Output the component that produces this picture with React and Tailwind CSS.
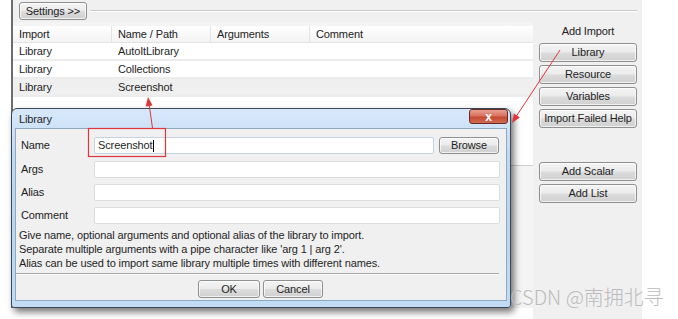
import React from "react";

function Btn({ children, className = "" }) {
  return (
    <div
      className={
        "flex items-center justify-center rounded-[3px] border border-[#8e8f8f] bg-[linear-gradient(#f4f4f4_0%,#ebebeb_48%,#dcdcdc_52%,#d0d0d0_100%)] text-[#1e1e1e] shadow-[inset_0_0_0_1px_rgba(255,255,255,0.7)] " +
        className
      }
    >
      {children}
    </div>
  );
}

function Row({ label, children, className = "" }) {
  return (
    <div className={"flex h-[17px] items-center " + className}>
      <div className="w-[78px] pl-[5px] text-[#222]">{label}</div>
      {children}
    </div>
  );
}

export default function App() {
  return (
    <div className="relative w-[678px] h-[319px] overflow-hidden bg-white font-['Liberation_Sans',Arial,sans-serif] text-[11px] tracking-[-0.12px] text-[#1e1e1e]">
      {/* main window */}
      <div className="ml-[11px] flex h-[319px] w-[631px] flex-col">
        {/* settings row */}
        <div className="flex h-[22px] items-center border-l-2 border-[#6d6d6d] bg-[#f0f0f0] pl-[6px] pr-[5px]">
          <Btn className="h-[18px] w-[68px]">Settings &gt;&gt;</Btn>
          <div className="ml-[3px] h-[2px] flex-1 border-t border-b border-t-[#c8c8c8] border-b-white" />
        </div>
        <div className="flex flex-1">
          {/* left column */}
          <div className="flex w-[522px] flex-col">
            <div className="flex flex-1 flex-col border-l-2 border-[#6d6d6d] bg-[#f4f4f4] pt-[4px]">
              <div className="flex h-[140px] flex-col border-b border-[#cfcfcf] bg-white">
                <div className="flex h-[17px] items-center border-b border-[#e2e2e2] bg-[linear-gradient(#ffffff,#f3f3f3)] text-[#222]">
                  <div className="w-[99px] border-r border-[#e4e4e4] pl-[6px]">Import</div>
                  <div className="w-[99px] border-r border-[#e4e4e4] pl-[6px]">Name / Path</div>
                  <div className="w-[99px] border-r border-[#e4e4e4] pl-[6px]">Arguments</div>
                  <div className="flex-1 pl-[6px]">Comment</div>
                </div>
                {[
                  ["Library", "AutoItLibrary", "bg-white"],
                  ["Library", "Collections", "bg-white"],
                  ["Library", "Screenshot", "bg-[#efefef]"],
                ].map(([a, b, bg]) => (
                  <div key={b} className={"flex h-[18px] items-center border-b-2 border-[#ececec] " + bg}>
                    <div className="w-[99px] pl-[6px]">{a}</div>
                    <div className="w-[99px] pl-[6px]">{b}</div>
                  </div>
                ))}
              </div>
            </div>
            <div className="h-[11px] bg-white" />
          </div>
          {/* right panel */}
          <div className="flex w-[109px] flex-col bg-[#f0f0f0] pl-[6px] pr-[5px] pt-[2px]">
            <div className="h-[14px] text-center leading-[14px] text-[#222]">Add Import</div>
            <div className="mt-[5px] flex flex-col gap-[3px]">
              <Btn className="h-[19px]">Library</Btn>
              <Btn className="h-[19px]">Resource</Btn>
              <Btn className="h-[19px]">Variables</Btn>
              <Btn className="h-[19px]">Import Failed Help</Btn>
            </div>
            <div className="mt-[34px] flex flex-col gap-[3px]">
              <Btn className="h-[19px]">Add Scalar</Btn>
              <Btn className="h-[19px]">Add List</Btn>
            </div>
          </div>
        </div>
      </div>

      {/* dialog */}
      <div className="absolute left-[11px] top-[108px] flex h-[200px] w-[500px] flex-col rounded-t-[6px] rounded-b-[3px] border border-[#3d4856] bg-[linear-gradient(#d7e8fa,#bfd9f4_25%,#b9d5f2_60%,#c2dcf5)] px-[3px] pb-[6px] shadow-[3px_4px_7px_rgba(0,0,0,0.55)]">
        <div className="flex h-[19px] items-start justify-between">
          <div className="pl-[4px] pt-[4px] leading-[12px] text-[#1e1e1e]">Library</div>
          <div className="mr-[-1px] flex h-[15px] w-[39px] items-center justify-center rounded-[3px] border border-[#6b2a22] bg-[linear-gradient(#e8a093_0%,#d9725f_45%,#c54a33_55%,#d06a52_100%)] text-[12px] font-bold leading-none text-white">
            x
          </div>
        </div>
        <div className="flex flex-1 flex-col border border-[#8fa7c1] bg-[#f0f0f0] pb-[2px] pt-[8px]">
          <Row label="Name">
            <div className="flex h-[17px] w-[340px] items-center rounded-[2px] border border-[#c3d3e3] bg-white pl-[3px]">
              <span>Screenshot</span>
              <span className="ml-[1px] h-[12px] w-[1px] bg-black" />
            </div>
            <Btn className="ml-[5px] h-[17px] w-[60px]">Browse</Btn>
          </Row>
          <Row label="Args" className="mt-[7px]">
            <div className="h-[17px] w-[406px] rounded-[2px] border border-[#dcdcdc] bg-white" />
          </Row>
          <Row label="Alias" className="mt-[6px]">
            <div className="h-[17px] w-[406px] rounded-[2px] border border-[#dcdcdc] bg-white" />
          </Row>
          <Row label="Comment" className="mt-[6px]">
            <div className="h-[17px] w-[406px] rounded-[2px] border border-[#dcdcdc] bg-white" />
          </Row>
          <div className="mt-[4px] h-[42px] pl-[3px] leading-[14px] text-[#1e1e1e]">
            <div>Give name, optional arguments and optional alias of the library to import.</div>
            <div>Separate multiple arguments with a pipe character like 'arg 1 | arg 2'.</div>
            <div>Alias can be used to import same library multiple times with different names.</div>
          </div>
          <div className="mr-[7px] mt-[3px] h-[2px] border-t border-b border-t-[#a8a8a8] border-b-white" />
          <div className="mt-[5px] flex">
            <Btn className="ml-[182px] h-[18px] w-[62px] border-[#3c7fb1] shadow-[inset_0_0_0_1px_#bfe3fb]">OK</Btn>
            <Btn className="ml-[3px] h-[18px] w-[60px]">Cancel</Btn>
          </div>
        </div>
      </div>

      {/* annotations */}
      <svg className="pointer-events-none absolute inset-0" width="678" height="319" viewBox="0 0 678 319">
        <rect x="88.5" y="128.5" width="77" height="28" fill="none" stroke="#e0353b" strokeWidth="1.2" />
        <line x1="152.5" y1="128" x2="149.2" y2="105" stroke="#e0353b" strokeWidth="1" />
        <polygon points="148,97 152.6,105.5 145.6,106.4" fill="#e0353b" />
        <line x1="560" y1="50" x2="516.5" y2="116" stroke="#e0353b" strokeWidth="1" />
        <polygon points="512,123 519.8,117.4 514,113.6" fill="#e0353b" />
      </svg>

      {/* watermark */}
      <div className="absolute left-[510px] top-[285px] font-['Noto_Sans_CJK_SC','Noto_Sans',sans-serif] text-[20px] leading-[24px] font-light tracking-normal text-[#bcbcbc]">
        CSDN @南拥北寻
      </div>
    </div>
  );
}
